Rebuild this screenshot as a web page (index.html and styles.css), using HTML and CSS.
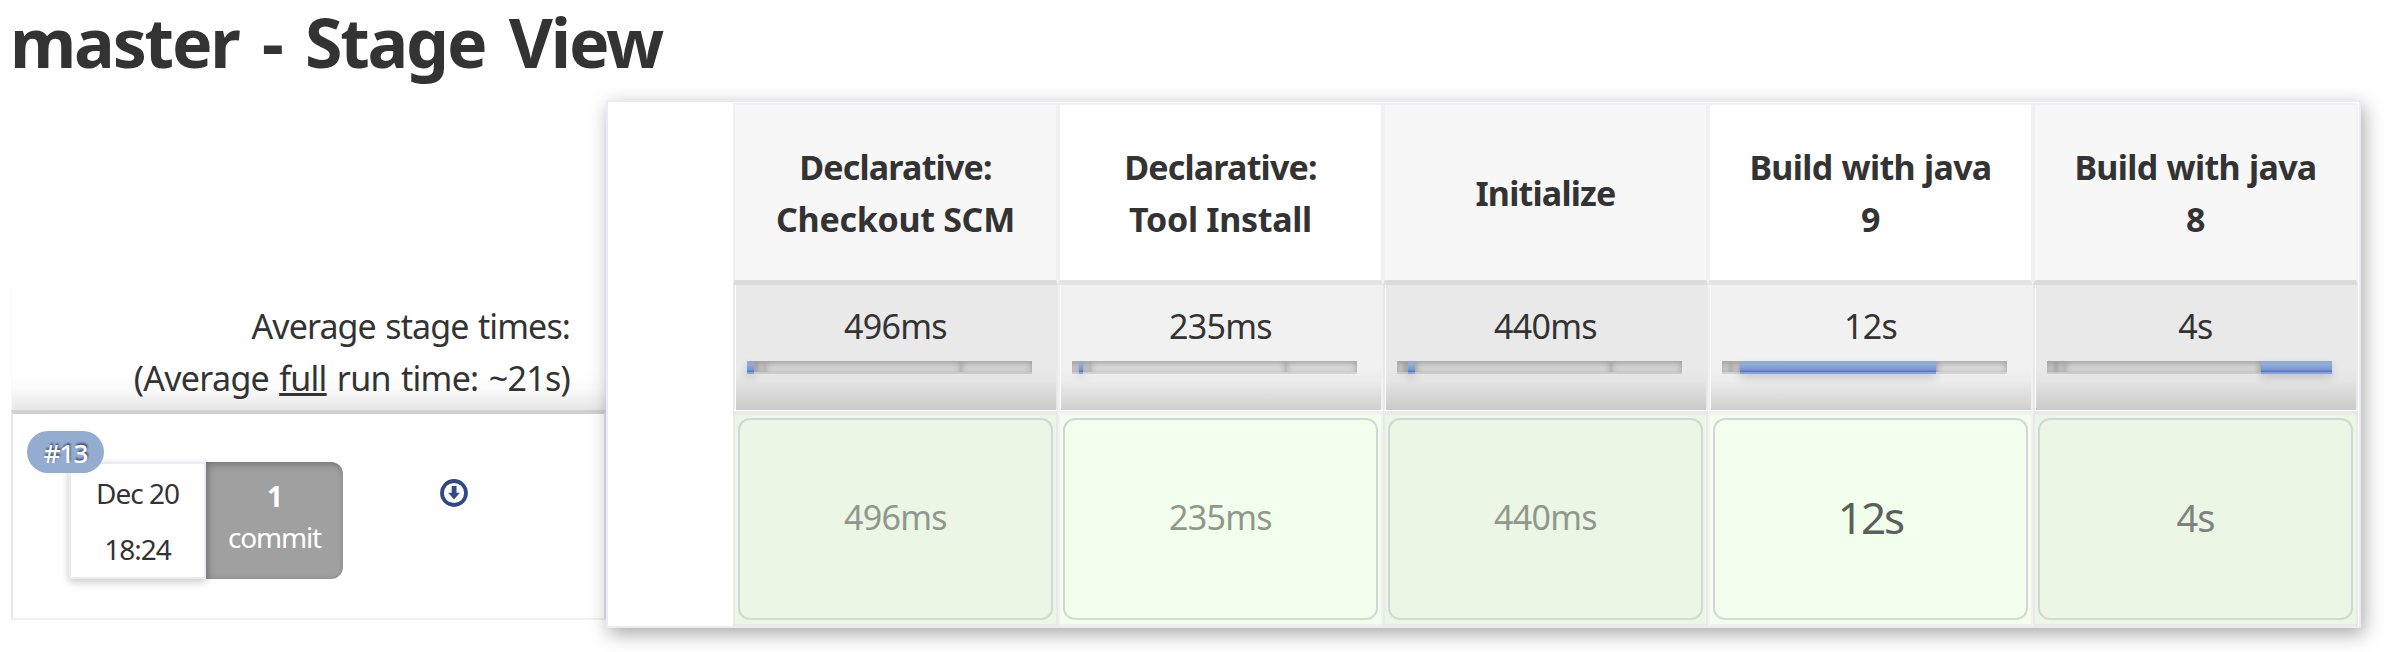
FILE: index.html
```html
<!DOCTYPE html>
<html lang="en">
<head>
<meta charset="utf-8">
<title>master - Stage View</title>
<link rel="stylesheet" href="styles.css">
</head>
<body>
<h1 class="title">master - Stage View</h1>
<main class="pipeline">
  <section class="side">
    <div class="averages">
      <div class="avg-a">Average stage times:</div>
      <div class="avg-b">(Average <u>full</u> run time: ~21s)</div>
    </div>
    <div class="run">
      <span class="badge"><span>#13</span></span>
      <div class="date"><div class="day">Dec 20</div><div class="time">18:24</div></div>
      <div class="commit"><b>1</b><span>commit</span></div>
      <svg class="download" viewBox="0 0 28 28"><circle cx="14" cy="14" r="12" fill="none" stroke="#2f4a86" stroke-width="3.8"/><path d="M11.7 7h4.8v6.8h3.4L14 20.6l-5.8-6.8h3.5z" fill="#2f4a86"/></svg>
    </div>
  </section>
  <section class="table">
    <div class="column odd">
      <div class="head"><span class="tight">Declarative:</span><span>Checkout SCM</span></div>
      <div class="total"><span>496ms</span><div class="bar"><i class="on" style="width:7px"></i><i style="width:4px"></i><i style="width:7px"></i><i style="width:196px"></i><i style="width:71px"></i></div></div>
      <div class="cell"><div class="box"><span class="ms">496ms</span></div></div>
    </div>
    <div class="column">
      <div class="head"><span class="tight">Declarative:</span><span>Tool Install</span></div>
      <div class="total"><span>235ms</span><div class="bar"><i style="width:7px"></i><i class="on" style="width:4px"></i><i style="width:7px"></i><i style="width:196px"></i><i style="width:71px"></i></div></div>
      <div class="cell"><div class="box"><span class="ms">235ms</span></div></div>
    </div>
    <div class="column odd">
      <div class="head"><span class="tight">Initialize</span></div>
      <div class="total"><span>440ms</span><div class="bar"><i style="width:7px"></i><i style="width:4px"></i><i class="on" style="width:7px"></i><i style="width:196px"></i><i style="width:71px"></i></div></div>
      <div class="cell"><div class="box"><span class="ms">440ms</span></div></div>
    </div>
    <div class="column">
      <div class="head"><span class="build">Build with java</span><span>9</span></div>
      <div class="total"><span>12s</span><div class="bar"><i style="width:7px"></i><i style="width:4px"></i><i style="width:7px"></i><i class="on" style="width:196px"></i><i style="width:71px"></i></div></div>
      <div class="cell"><div class="box"><span class="large">12s</span></div></div>
    </div>
    <div class="column odd">
      <div class="head"><span class="build">Build with java</span><span>8</span></div>
      <div class="total"><span>4s</span><div class="bar"><i style="width:7px"></i><i style="width:4px"></i><i style="width:7px"></i><i style="width:196px"></i><i class="on" style="width:71px"></i></div></div>
      <div class="cell"><div class="box"><span class="medium">4s</span></div></div>
    </div>
  </section>
</main>
</body>
</html>
```
FILE: styles.css
```css
* { box-sizing: border-box; }
body { margin: 0; width: 2387px; height: 652px; background: #fff; color: #333; font-family: "Noto Sans", "Open Sans", sans-serif; font-size: 34px; line-height: 52px; }
.title { margin: 0; height: 100px; padding: 0 0 0 10px; font-size: 68px; line-height: 84px; font-weight: 700; letter-spacing: -2.2px; word-spacing: 8px; white-space: nowrap; }
.pipeline { display: flex; padding-left: 11px; height: 528px; }
.side { width: 595px; padding-top: 186px; }
.averages { height: 124px; padding: 14px 36px 0 0; text-align: right; white-space: nowrap; border-left: 1px solid #fafafa; background: linear-gradient(#fff 70%, #fafafa 84%, #e6e6e6); }
.avg-a { letter-spacing: -.9px; word-spacing: 1.5px; }
.avg-b { letter-spacing: -.7px; word-spacing: 2px; }
.run { position: relative; display: flex; align-items: flex-start; height: 210px; padding: 48px 0 0 56px; border: 2px solid #e8e8e8; border-top: 4px solid #d1d1d1; border-bottom-color: #f0f0f0; font-size: 28px; }
.badge { position: absolute; left: 14px; top: 17px; z-index: 1; width: 77px; height: 42px; border-radius: 21px; background: #93acd0; color: #fff; font-size: 26px; font-weight: 500; line-height: 44px; text-align: center; text-shadow: 1px -2px 2px #40506c; letter-spacing: -1px; }
.date { width: 137px; height: 117px; padding-top: 1px; border: 2px solid #e9edf1; background: #fff; box-shadow: 0 3px 8px rgba(0,0,0,.22); text-align: center; line-height: 56px; letter-spacing: -1px; }
.commit { display: flex; flex-direction: column; align-items: center; width: 137px; height: 117px; padding-top: 14px; border-radius: 0 12px 12px 0; background: #a0a0a0; box-shadow: inset 2px 2px 7px rgba(0,0,0,.3); color: #fff; line-height: 41px; letter-spacing: -1.2px; }
.download { width: 28px; height: 28px; margin: 17px 0 0 97px; }
.table { position: relative; display: flex; width: 1755px; height: 528px; padding: 1px 1px 0 125px; border: 2px solid #e9edf1; background: #fff; box-shadow: 3px 6px 18px rgba(0,0,0,.34); }
.column { flex: none; width: 325px; height: 523px; }
.head { display: flex; flex-direction: column; justify-content: center; align-items: center; height: 182px; border: 2px solid #f1f1f1; border-bottom: 5px solid #e4e4e4; background: #fff; font-weight: 700; letter-spacing: -.3px; white-space: nowrap; }
.odd .head { background: #f7f7f7; border-bottom-color: #dcdcdc; }
.tight { letter-spacing: -.8px; }
.build { letter-spacing: -.7px; word-spacing: 1px; }
.total { height: 126px; padding: 15px 26px 0 11px; border: 0 solid #f1f1f1; border-width: 0 2px; border-bottom: 1px solid #fff; box-shadow: inset 1px 0 #fff; background: linear-gradient(#f1f1f1 65%, #ececec 77%, #cfcfcf); text-align: center; }
.odd .total { border-color: #e9e9e9; border-bottom-color: #fff; background: linear-gradient(#e9e9e9 65%, #e4e4e4 77%, #cacaca); }
.total span { display: block; margin-left: 15px; letter-spacing: -.7px; }
.bar { display: flex; width: 285px; height: 13px; margin: 9px 0 0 1px; background: #e3e3e3; }
.bar i { flex: none; height: 13px; border-bottom: 2px solid #d2d2d2; background: rgba(0,0,0,.02); box-shadow: inset 0 2px 7px rgba(0,0,0,.3); }
.odd .bar { background: #dedede; }
.odd .bar i { border-bottom-color: #cacaca; }
.bar .on, .odd .bar .on { border-bottom-color: #84a0df; background: linear-gradient(#91acd0 35%, #7b9ad0 75%, #5271ca); box-shadow: 0 4px 8px rgba(0,0,0,.15); }
.cell { height: 215px; padding: 3px; border: 2px solid #f1f1f1; border-top: 4px solid #f1f1f1; background: #f2ffec; }
.odd .cell { border-color: #e9e9e9; background: #ebf6e5; }
.box { display: flex; align-items: center; justify-content: center; height: 202px; padding-bottom: 4px; border: 2px solid #d2d6d8; border-bottom-color: #d1ddcd; border-radius: 12px; }
.ms { color: #90988d; letter-spacing: -.7px; }
.medium { color: #7e847b; font-size: 38px; letter-spacing: -1px; }
.large { color: #5b605a; font-size: 44px; letter-spacing: -2px; }
```
